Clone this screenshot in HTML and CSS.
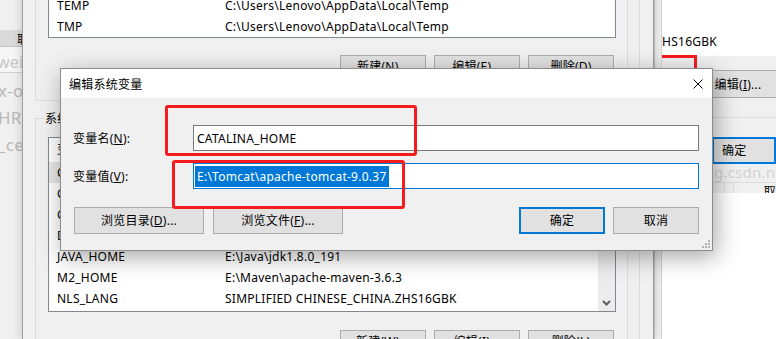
FILE: index.html
```html
<!DOCTYPE html>
<html lang="zh-CN">
<head>
    <meta charset="UTF-8">
    <meta name="viewport" content="width=device-width, initial-scale=1.0">
    <title>编辑系统变量</title>
    <link rel="stylesheet" href="styles.css">
</head>
<body>
    <!-- 左边后面的窗口 -->
    <div class="win back-left">
        <div class="bl-top"></div>
        <div class="bl-btn">取</div>
        <div class="bl-field">wei</div>
        <div class="bl-faded">x-os</div>
        <div class="bl-faded">HR</div>
        <div class="bl-faded">_ce</div>
    </div>

    <!-- 右边后面的窗口 -->
    <div class="win back-right">
        <div class="br-frame"></div>
        <div class="br-main">
            <div class="br-list">
                <div class="br-list-inner"><span>SIMPLIFIED CHINESE_CHINA.ZHS16GBK</span></div>
            </div>
            <div class="br-panel">
                <button class="btn br-edit">编辑(<u>I</u>)...</button>
                <div class="br-sep"></div>
                <button class="btn btn-ok br-ok">确定</button>
                <div class="br-head">
                    <span class="br-cell"></span>
                    <span class="br-cell br-cell-narrow"></span>
                    <span class="br-cell-text">取</span>
                </div>
                <div class="br-water">blog.csdn.net</div>
            </div>
            <div class="br-white"></div>
            <div class="br-mark"></div>
        </div>
    </div>

    <!-- 环境变量窗口 -->
    <div class="win env">
        <div class="env-body">
            <fieldset class="group">
                <legend>用户变量(<u>U</u>)</legend>
                <div class="listbox list-user">
                    <div class="rows">
                        <div class="row"><span class="c1">Path</span><span>C:\Users\Lenovo\AppData\Local\Microsoft\WindowsApps;</span></div>
                        <div class="row"><span class="c1">TEMP</span><span>C:\Users\Lenovo\AppData\Local\Temp</span></div>
                        <div class="row"><span class="c1">TMP</span><span>C:\Users\Lenovo\AppData\Local\Temp</span></div>
                    </div>
                </div>
                <div class="btn-row">
                    <button class="btn">新建(<u>N</u>)...</button>
                    <button class="btn">编辑(<u>E</u>)...</button>
                    <button class="btn">删除(<u>D</u>)</button>
                </div>
            </fieldset>

            <fieldset class="group group-sys">
                <legend>系统变量(<u>S</u>)</legend>
                <div class="listbox list-sys">
                    <div class="rows">
                        <div class="row head"><span class="c1">变量</span><span>值</span></div>
                        <div class="row selected"><span class="c1">CATALINA_HOME</span><span>E:\Tomcat\apache-tomcat-9.0.37</span></div>
                        <div class="row"><span class="c1">CLASSPATH</span><span>.;%JAVA_HOME%\lib;%JAVA_HOME%\lib\tools.jar</span></div>
                        <div class="row"><span class="c1">ComSpec</span><span>C:\Windows\system32\cmd.exe</span></div>
                        <div class="row"><span class="c1">DriverData</span><span>C:\Windows\System32\Drivers\DriverData</span></div>
                        <div class="row"><span class="c1">JAVA_HOME</span><span>E:\Java\jdk1.8.0_191</span></div>
                        <div class="row"><span class="c1">M2_HOME</span><span>E:\Maven\apache-maven-3.6.3</span></div>
                        <div class="row"><span class="c1">NLS_LANG</span><span>SIMPLIFIED CHINESE_CHINA.ZHS16GBK</span></div>
                    </div>
                    <div class="scroll">
                        <svg width="9" height="6" viewBox="0 0 9 6"><path d="M1 1L4.5 4.5L8 1" fill="none" stroke="#606060" stroke-width="2"/></svg>
                    </div>
                </div>
                <div class="btn-row">
                    <button class="btn">新建(<u>W</u>)...</button>
                    <button class="btn">编辑(<u>I</u>)...</button>
                    <button class="btn">删除(<u>L</u>)</button>
                </div>
            </fieldset>
        </div>
    </div>

    <!-- 编辑系统变量 -->
    <div class="dlg">
        <div class="dlg-title">
            <span>编辑系统变量</span>
            <svg class="dlg-close" width="10" height="10" viewBox="0 0 10 10"><path d="M0.5 0.5L9.5 9.5M9.5 0.5L0.5 9.5" stroke="#000" stroke-width="1"/></svg>
        </div>
        <div class="dlg-body">
            <div class="field">
                <label>变量名(<u>N</u>):</label>
                <div class="input">CATALINA_HOME</div>
            </div>
            <div class="field field-value">
                <label>变量值(<u>V</u>):</label>
                <div class="input input-focus"><span class="sel">E:\Tomcat\apache-tomcat-9.0.37</span></div>
            </div>
            <div class="dlg-btns">
                <button class="btn btn-wide">浏览目录(<u>D</u>)...</button>
                <button class="btn btn-wide">浏览文件(<u>F</u>)...</button>
                <span class="spacer"></span>
                <button class="btn btn-ok">确定</button>
                <button class="btn">取消</button>
            </div>
        </div>
        <!-- 红框标注 -->
        <div class="mark mark-name"></div>
        <div class="mark mark-value"></div>
        <svg class="grip" width="8" height="8" viewBox="0 0 8 8" fill="#b4b4b4">
            <rect x="6" y="0" width="2" height="2"/>
            <rect x="3" y="3" width="2" height="2"/><rect x="6" y="3" width="2" height="2"/>
            <rect x="0" y="6" width="2" height="2"/><rect x="3" y="6" width="2" height="2"/><rect x="6" y="6" width="2" height="2"/>
        </svg>
    </div>
</body>
</html>
```

FILE: styles.css
```css
* {
    box-sizing: border-box;
}

body {
    margin: 0;
    width: 776px;
    height: 339px;
    overflow: hidden;
    position: relative;
    background: #ffffff;
    font-family: "Noto Sans", "Noto Sans CJK SC", sans-serif;
    font-size: 12px;
    letter-spacing: 0.25px;
    color: #000;
}

u {
    text-decoration: underline;
    text-underline-offset: 1px;
}

.win {
    position: absolute;
    background: #f0f0f0;
    overflow: hidden;
}

.btn {
    display: flex;
    align-items: center;
    justify-content: center;
    width: 86px;
    height: 23px;
    padding: 0;
    background: #e1e1e1;
    border: 1px solid #adadad;
    font: inherit;
    letter-spacing: inherit;
    color: #000;
    line-height: 17px;
}

.btn-ok {
    border: 2px solid #0078d7;
}

/* 左边的窗口 */
.back-left {
    left: 0;
    top: 0;
    width: 22px;
    height: 339px;
}

.bl-top {
    height: 30px;
}

.bl-btn {
    height: 17px;
    padding-left: 17px;
    background: #dadada;
    border-bottom: 1px solid #c4c4c4;
    line-height: 19px;
    white-space: nowrap;
}

.bl-field {
    height: 26px;
    margin-left: -3px;
    background: #f6f6f6;
    border-bottom: 1px solid #d0d0d0;
    color: #c8c8c8;
    font-size: 16px;
    line-height: 30px;
}

.bl-faded {
    height: 27px;
    margin-left: -2px;
    color: #b9b9b9;
    font-size: 17px;
    line-height: 36px;
    white-space: nowrap;
}

/* 右边的窗口 */
.back-right {
    left: 654px;
    top: 0;
    width: 122px;
    height: 339px;
    display: flex;
}

.br-frame {
    flex-shrink: 0;
    width: 8px;
    border-left: 1px solid #c8c8c8;
    border-right: 1px solid #d4d4d4;
}

.br-main {
    flex: 1;
    min-width: 0;
    display: flex;
    flex-direction: column;
    position: relative;
}

.br-list {
    height: 56px;
    padding-top: 31px;
    background: #fff;
    overflow: hidden;
    line-height: 21px;
}

.br-list-inner {
    display: flex;
    justify-content: flex-end;
    padding-right: 59px;
    white-space: nowrap;
}

.br-list-inner span {
    flex-shrink: 0;
}

.br-panel {
    position: relative;
    display: flex;
    flex-direction: column;
    padding-top: 14px;
}

.br-edit {
    margin-left: 33px;
    height: 28px;
}

.br-sep {
    margin-top: 19px;
    border-top: 1px solid #dcdcdc;
}

.br-ok {
    margin-top: 19px;
    width: 64px;
    height: 27px;
    justify-content: flex-start;
    padding-left: 8px;
    margin-left: 50px;
}

.br-head {
    display: flex;
    margin-top: 18px;
    height: 11px;
    border-top: 1px solid #dcdcdc;
    overflow: hidden;
    line-height: 18px;
}

.br-cell {
    width: 66px;
    border-right: 1px solid #dcdcdc;
}

.br-cell-narrow {
    width: 9px;
}

.br-cell-text {
    padding-left: 30px;
}

.br-water {
    position: absolute;
    left: 29px;
    top: 106px;
    color: #cfcfcf;
    font-size: 15px;
    white-space: nowrap;
    text-shadow: 0 0 1px #fff;
}

.br-white {
    flex: 1;
    background: #fff;
}

.br-mark {
    position: absolute;
    left: 0;
    top: 55px;
    width: 35px;
    height: 40px;
    border-top: 3px solid #f41c1c;
    border-right: 3px solid #f41c1c;
}

/* 环境变量窗口 */
.env {
    left: 22px;
    top: -50px;
    width: 632px;
    height: 389px;
    border: 1px solid #a0a0a0;
    border-bottom: none;
    box-shadow: 0 0 10px rgba(0, 0, 0, 0.2);
}

.env-body {
    width: 617px;
    height: 100%;
    padding-left: 12px;
    border-right: 1px solid #dcdcdc;
}

.group {
    width: 593px;
    margin: 0;
    padding: 0 11px 22px 12px;
    border: 1px solid #dcdcdc;
}

.group legend {
    margin-left: -5px;
    padding: 0 2px;
    line-height: 17px;
}

.group-sys {
    margin-top: 9px;
}

.listbox {
    display: flex;
    background: #fff;
    border: 1px solid #828790;
    overflow: hidden;
}

.list-user {
    margin-top: 5px;
    height: 65px;
}

.list-sys {
    margin-top: 10px;
    height: 175px;
}

.rows {
    flex: 1;
    min-width: 0;
}

.row {
    display: flex;
    height: 21px;
    line-height: 21px;
    white-space: nowrap;
}

.row .c1 {
    flex-shrink: 0;
    width: 176px;
    padding-left: 8px;
}

.row.head {
    height: 24px;
    line-height: 23px;
}

.row.selected {
    background: #e6e6e6;
}

.scroll {
    flex-shrink: 0;
    width: 17px;
    display: flex;
    flex-direction: column;
    justify-content: flex-end;
    align-items: center;
    padding-bottom: 5px;
    background: #ececec;
}

.btn-row {
    display: flex;
    justify-content: flex-end;
    gap: 8px;
    margin-top: 17px;
    padding-right: 2px;
}

.group-sys .btn-row {
    margin-top: 18px;
}

/* 编辑系统变量对话框 */
.dlg {
    position: absolute;
    left: 60px;
    top: 68px;
    width: 653px;
    height: 183px;
    background: #f0f0f0;
    border: 1px solid #8c8c8c;
    box-shadow: 3px 6px 22px rgba(0, 0, 0, 0.35);
}

.dlg-title {
    display: flex;
    align-items: center;
    justify-content: space-between;
    height: 29px;
    padding: 0 9px 0 8px;
    background: #fff;
}

.dlg-body {
    padding: 27px 13px 0 12px;
}

.field {
    display: grid;
    grid-template-columns: 120px 1fr;
    align-items: center;
}

.field-value {
    margin-top: 12px;
}

.input {
    display: flex;
    align-items: center;
    height: 26px;
    padding-left: 3px;
    background: #fff;
    border: 1px solid #7a7a7a;
    white-space: nowrap;
}

.input-focus {
    padding-left: 1px;
    border-color: #0078d7;
}

.sel {
    padding: 0 2px;
    line-height: 21px;
    background: #0078d7;
    color: #fff;
}

.dlg-btns {
    display: flex;
    gap: 8px;
    margin-top: 18px;
}

.btn-wide {
    width: 130px;
    height: 27px;
}

.btn-wide:first-child {
    margin-left: 1px;
    margin-right: 1px;
}

.dlg-btns .btn {
    height: 27px;
}

.spacer {
    flex: 1;
}

.mark {
    position: absolute;
    border: 3px solid #f41c1c;
    border-radius: 3px;
}

.mark-name {
    left: 104px;
    top: 36px;
    width: 252px;
    height: 51px;
}

.mark-value {
    left: 111px;
    top: 91px;
    width: 233px;
    height: 49px;
}

.grip {
    position: absolute;
    right: 2px;
    bottom: 2px;
}
```
